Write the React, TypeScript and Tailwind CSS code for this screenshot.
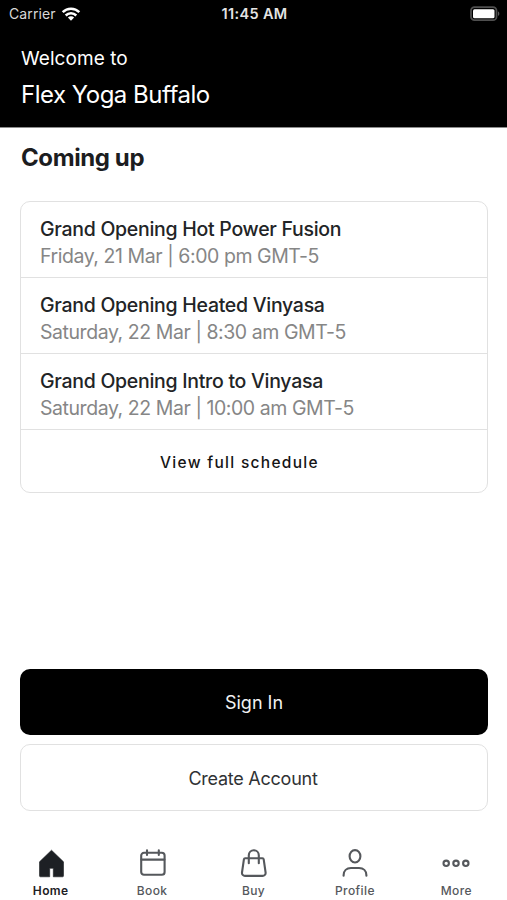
import type { ReactNode } from "react";

type Session = {
  title: string;
  time: string;
};

type Tab = {
  label: string;
  icon: ReactNode;
  active?: boolean;
};

const sessions: Session[] = [
  { title: "Grand Opening Hot Power Fusion", time: "Friday, 21 Mar | 6:00 pm GMT-5" },
  { title: "Grand Opening Heated Vinyasa", time: "Saturday, 22 Mar | 8:30 am GMT-5" },
  { title: "Grand Opening Intro to Vinyasa", time: "Saturday, 22 Mar | 10:00 am GMT-5" },
];

const stroke = {
  fill: "none",
  stroke: "currentColor",
  strokeWidth: 2.1,
  strokeLinecap: "round",
  strokeLinejoin: "round",
} as const;

const tabs: Tab[] = [
  {
    label: "Home",
    active: true,
    icon: (
      <svg width="28" height="30" viewBox="0 0 28 30">
        <path
          d="M14.5 1.2 26.5 12.8V26.8a1 1 0 0 1-1 1H16.3V19.3h-3.6V27.8H3.5a1 1 0 0 1-1-1V12.8Z"
          fill="currentColor"
          stroke="currentColor"
          strokeWidth="0.6"
          strokeLinejoin="round"
        />
      </svg>
    ),
  },
  {
    label: "Book",
    icon: (
      <svg width="28" height="30" viewBox="0 0 28 30" {...stroke}>
        <rect x="3.2" y="3.8" width="23.4" height="22" rx="2.8" />
        <path d="M3.4 10.6h23M9 1.3v4.7M20.8 1.3v4.7" />
      </svg>
    ),
  },
  {
    label: "Buy",
    icon: (
      <svg width="28" height="30" viewBox="0 0 28 30" {...stroke}>
        <path d="M5.2 9.2h17.2a1.3 1.3 0 0 1 1.3 1.1l1.9 13.2a3 3 0 0 1-3 3.4H5a3 3 0 0 1-3-3.4l1.9-13.2a1.3 1.3 0 0 1 1.3-1.1Z" />
        <path d="M8.8 14.2V6.2a5 5 0 0 1 10 0v8" />
      </svg>
    ),
  },
  {
    label: "Profile",
    icon: (
      <svg width="28" height="30" viewBox="0 0 28 30" {...stroke}>
        <ellipse cx="14" cy="7.3" rx="5.4" ry="6.2" />
        <path d="M2.6 26.8v-.6c0-4.4 3-7.2 7.4-7.2h8c4.4 0 7.4 2.8 7.4 7.2v.6" />
      </svg>
    ),
  },
  {
    label: "More",
    icon: (
      <svg width="28" height="30" viewBox="0 0 28 30" {...stroke}>
        <circle cx="4.2" cy="14.3" r="2.7" />
        <circle cx="14" cy="14.3" r="2.7" />
        <circle cx="23.8" cy="14.3" r="2.7" />
      </svg>
    ),
  },
];

function StatusBar() {
  return (
    <div className="grid h-7 grid-cols-3 items-center pr-[7px] pl-[9px] text-sm leading-none">
      <div className="flex items-center gap-[5px]">
        <span className="tracking-[0.1px] text-[#d8d8d8]">Carrier</span>
        <svg width="20" height="15" viewBox="0 0 20 15" fill="none" stroke="#fff" strokeWidth="2.5">
          <path d="M1.7 5.1a11.7 11.7 0 0 1 16.6 0" />
          <path d="M4.7 8.5a7.5 7.5 0 0 1 10.6 0" />
          <path d="M10 13.7 6.9 10.6a4.4 4.4 0 0 1 6.2 0Z" fill="#fff" stroke="none" />
        </svg>
      </div>
      <span className="text-center text-[14.5px] font-semibold tracking-[0.35px] text-[#e4e4e4]">11:45 AM</span>
      <svg className="justify-self-end" width="31" height="16" viewBox="0 0 31 16">
        <rect x="2" y="1.2" width="25.5" height="13" rx="3.5" fill="none" stroke="#4f4f4f" strokeWidth="1.8" />
        <rect x="4" y="3.2" width="21.5" height="9" rx="1.5" fill="#fff" />
        <path d="M29 5.5c1.8.5 1.8 3.9 0 4.4Z" fill="#5a5a5a" />
      </svg>
    </div>
  );
}

function Schedule() {
  return (
    <div className="mt-[27px] h-[292px] rounded-[10px] border border-[#e1e1e1]">
      {sessions.map((s) => (
        <div key={s.title} className="flex h-[76px] flex-col justify-end border-b border-[#e1e1e1] px-[19px] pb-[7px]">
          <p className="text-[19.5px] leading-[27px] font-medium tracking-[-0.28px] text-[#222426]">{s.title}</p>
          <p className="text-[19.5px] leading-[27px] tracking-[-0.44px] text-[#868686]">{s.time}</p>
        </div>
      ))}
      <button className="flex h-[62px] w-full items-center justify-center pt-1 pr-[29px] text-[15.5px] font-medium tracking-[1.3px] text-[#151515]">
        View full schedule
      </button>
    </div>
  );
}

function TabBar() {
  return (
    <nav className="flex h-[64px]">
      {tabs.map((t) => (
        <div
          key={t.label}
          className={`flex flex-1 flex-col items-center pt-[13px] ${t.active ? "text-[#1d2024]" : "text-[#55585c]"}`}
        >
          {t.icon}
          <span className={`mt-1 text-xs leading-4 tracking-[0.4px] ${t.active ? "font-semibold" : "font-medium"}`}>
            {t.label}
          </span>
        </div>
      ))}
    </nav>
  );
}

export default function App() {
  return (
    <div className="flex h-[900px] w-[507px] flex-col overflow-hidden bg-white font-[Inter,sans-serif]">
      <header className="h-32 border-b border-[#8c8c8c] bg-black text-white">
        <StatusBar />
        <div className="px-[21px] pt-[17px]">
          <p className="text-[19px] leading-7 tracking-[0.05px]">Welcome to</p>
          <h1 className="mt-1.5 text-2xl leading-8 tracking-[-0.5px]">Flex Yoga Buffalo</h1>
        </div>
      </header>
      <main className="flex flex-1 flex-col pr-[19px] pl-5">
        <h2 className="mt-[14px] pl-px text-2xl leading-8 font-bold tracking-[-0.4px] text-[#1c1d1f]">Coming up</h2>
        <Schedule />
        <div className="mt-auto mb-[25px] flex flex-col gap-[9px]">
          <button className="h-[66px] rounded-[10px] bg-black pt-0.5 text-lg text-[#f2f2f2]">Sign In</button>
          <button className="h-[67px] rounded-[10px] border border-[#e1e1e1] pt-0.5 pr-0.5 text-lg tracking-[-0.25px] text-[#303234]">
            Create Account
          </button>
        </div>
      </main>
      <TabBar />
    </div>
  );
}
